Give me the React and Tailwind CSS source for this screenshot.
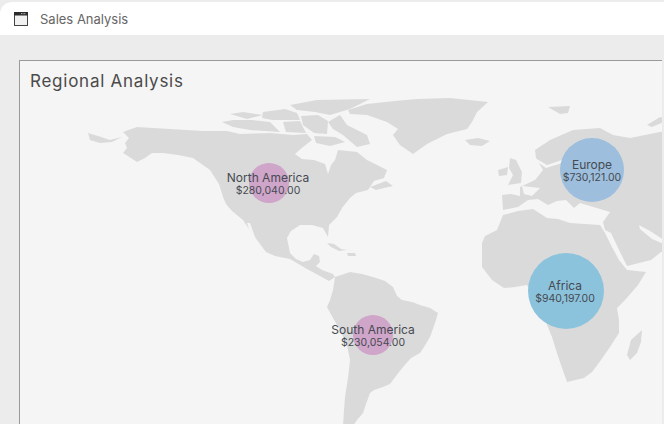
const LAND = [
  // north + central america
  '123,132 137,127 170,129 203,131 227,131 240,134 270,133 293,135 307,134 312,140 303,147 295,154 302,159 314,160 325,164 328,174 331,165 335,160 338,150 357,152 367,160 387,170 384,178 374,181 368,190 356,193 350,198 342,208 337,217 329,225 328,237 323,228 312,225 300,225 291,231 287,238 290,253 296,259 303,262 310,260 314,254 319,256 320,262 316,266 322,270 333,274 335,277 329,281 320,276 307,269 290,259 275,256 266,252 257,240 247,226 243,220 232,211 226,204 223,197 219,184 210,170 193,158 178,155 163,153 152,153 145,158 137,162 128,156 123,153 127,148 125,143 129,138',
  '370,187 378,184 386,181 393,186 384,188 376,190',
  '327,243 334,244 341,249 347,250 339,251 331,247',
  '347,253 355,253 356,256 348,256',
  // south america
  '335,277 350,272 362,274 373,277 385,281 393,287 397,296 402,300 412,302 420,305 430,308 438,313 435,323 430,337 424,347 420,353 411,358 403,367 396,376 390,384 383,387 374,390 370,393 366,404 363,413 357,420 353,426 343,426 344,410 345,397 348,378 350,360 347,345 340,330 333,318 327,307 330,300 333,290',
  // greenland
  '348,110 367,104 395,101 417,99 450,98 488,102 477,112 472,122 467,129 447,134 427,144 413,154 400,145 393,135 398,129 387,122 367,115 350,114',
  // arctic islands
  '290,105 317,100 370,99 350,109 330,115 315,112 297,110',
  '328,122 340,115 347,125 367,135 370,144 357,147 343,135 333,129',
  '222,122 233,120 252,120 270,122 280,132 250,130 233,127',
  '230,114 243,112 263,115 247,119',
  '263,112 285,109 297,113 300,120 286,120 272,120 262,118',
  '301,116 318,115 328,121 327,134 314,133 303,125',
  '283,122 300,121 306,133 286,132',
  '314,136 335,137 345,142 330,146 316,143',
  // aleutians
  '88,133 98,136 110,140 122,137 112,142 100,143 90,140',
  '131,140 138,139 134,144',
  // svalbard, novaya zemlya, iceland, uk, ireland
  '548,107 570,106 568,113 560,114',
  '647,125 660,117 664,118 664,122 652,127',
  '465,140 478,138 490,141 482,146 470,145',
  '510,158 516,160 522,172 521,183 508,185 513,175 509,168',
  '498,170 508,167 507,175 499,176',
  // eurasia
  '502,195 511,194 520,196 520,187 535,180 543,170 536,158 535,150 550,140 573,130 600,128 613,135 630,138 660,132 664,131 664,252 661,252 651,260 627,266 620,252 611,233 605,230 603,222 610,212 580,203 574,208 566,200 557,201 548,205 538,199 528,200 518,207 503,210',
  // africa
  '482,243 485,236 497,230 503,215 518,211 533,209 547,218 558,219 570,223 585,224 600,225 605,233 612,247 619,260 627,270 646,272 638,285 625,300 617,308 619,320 619,333 610,347 601,360 592,372 584,378 567,382 561,365 557,353 552,337 545,320 527,285 515,287 504,288 492,280 482,267',
  // madagascar
  '642,330 641,342 637,353 630,360 627,355 631,340',
]

// seas cut out of the land shapes
const WATER = [
  '247,223 250,223 256,240 253,240',
  '535,158 547,165 562,160 562,163 546,168 536,161',
  '522,186 540,188 532,196 524,194',
  '639,225 650,231 664,240 664,244 652,239 640,229',
]

const BUBBLES = [
  { name: 'North America', value: '$280,040.00', size: 'w-10 h-10', pos: 'left-[229px] top-[102px]', color: 'bg-[#cfa5c9]', label: 'left-[248px] top-[110px]' },
  { name: 'Europe', value: '$730,121.00', size: 'w-16 h-16', pos: 'left-[540px] top-[77px]', color: 'bg-[#9dbfdd]', label: 'left-[572px] top-[97px]' },
  { name: 'South America', value: '$230,054.00', size: 'w-10 h-10', pos: 'left-[333px] top-[254px]', color: 'bg-[#cfa5c9]', label: 'left-[353px] top-[262px]' },
  { name: 'Africa', value: '$940,197.00', size: 'w-[76px] h-[76px]', pos: 'left-[508px] top-[192px]', color: 'bg-[#8cc3dc]', label: 'left-[545px] top-[218px]' },
]

function WindowIcon() {
  return (
    <svg className="w-[14px] h-[14px]" viewBox="0 0 14 14">
      <rect x="0.5" y="0.5" width="13" height="13" fill="#f1f1f1" stroke="#444" />
      <rect x="0" y="0" width="14" height="3.5" fill="#2b2b2b" />
      <path d="M7 1.7h5" stroke="#eee" strokeWidth="0.8" strokeDasharray="1 0.6" />
    </svg>
  )
}

export default function App() {
  return (
    <div className="w-[664px] h-[424px] overflow-hidden bg-[#ececec] pt-[2px] font-['Inter',sans-serif]">
      <header className="h-[33px] flex items-center gap-3 pl-[14px] bg-white rounded-tl-xl">
        <WindowIcon />
        <span className="text-[13px] pt-[2px] text-[#666]">Sales Analysis</span>
      </header>

      <main className="pt-[25px] pl-[19px] pr-[2px]">
        <section className="relative h-[364px] bg-[#f5f5f5] border-l border-t border-[#9a9a9a] overflow-hidden">
          <h2 className="pt-[8px] pl-[10px] text-[17px] leading-6 tracking-[0.75px] text-[#4a4a4a] font-normal">Regional Analysis</h2>

          <svg className="absolute left-0 top-0 w-[644px] h-[364px]" viewBox="20 61 644 364">
            {LAND.map((points) => (
              <polygon key={points} points={points} fill="#dadada" />
            ))}
            {WATER.map((points) => (
              <polygon key={points} points={points} fill="#f5f5f5" />
            ))}
          </svg>

          {BUBBLES.map((b) => (
            <div key={b.name}>
              <div className={`absolute rounded-full ${b.size} ${b.pos} ${b.color}`} />
              <div className={`absolute -translate-x-1/2 text-center whitespace-nowrap text-[#464a52] ${b.label}`}>
                <div className="text-[12px] leading-[13px]">{b.name}</div>
                <div className="text-[10.5px] leading-[13px]">{b.value}</div>
              </div>
            </div>
          ))}
        </section>
      </main>
    </div>
  )
}
